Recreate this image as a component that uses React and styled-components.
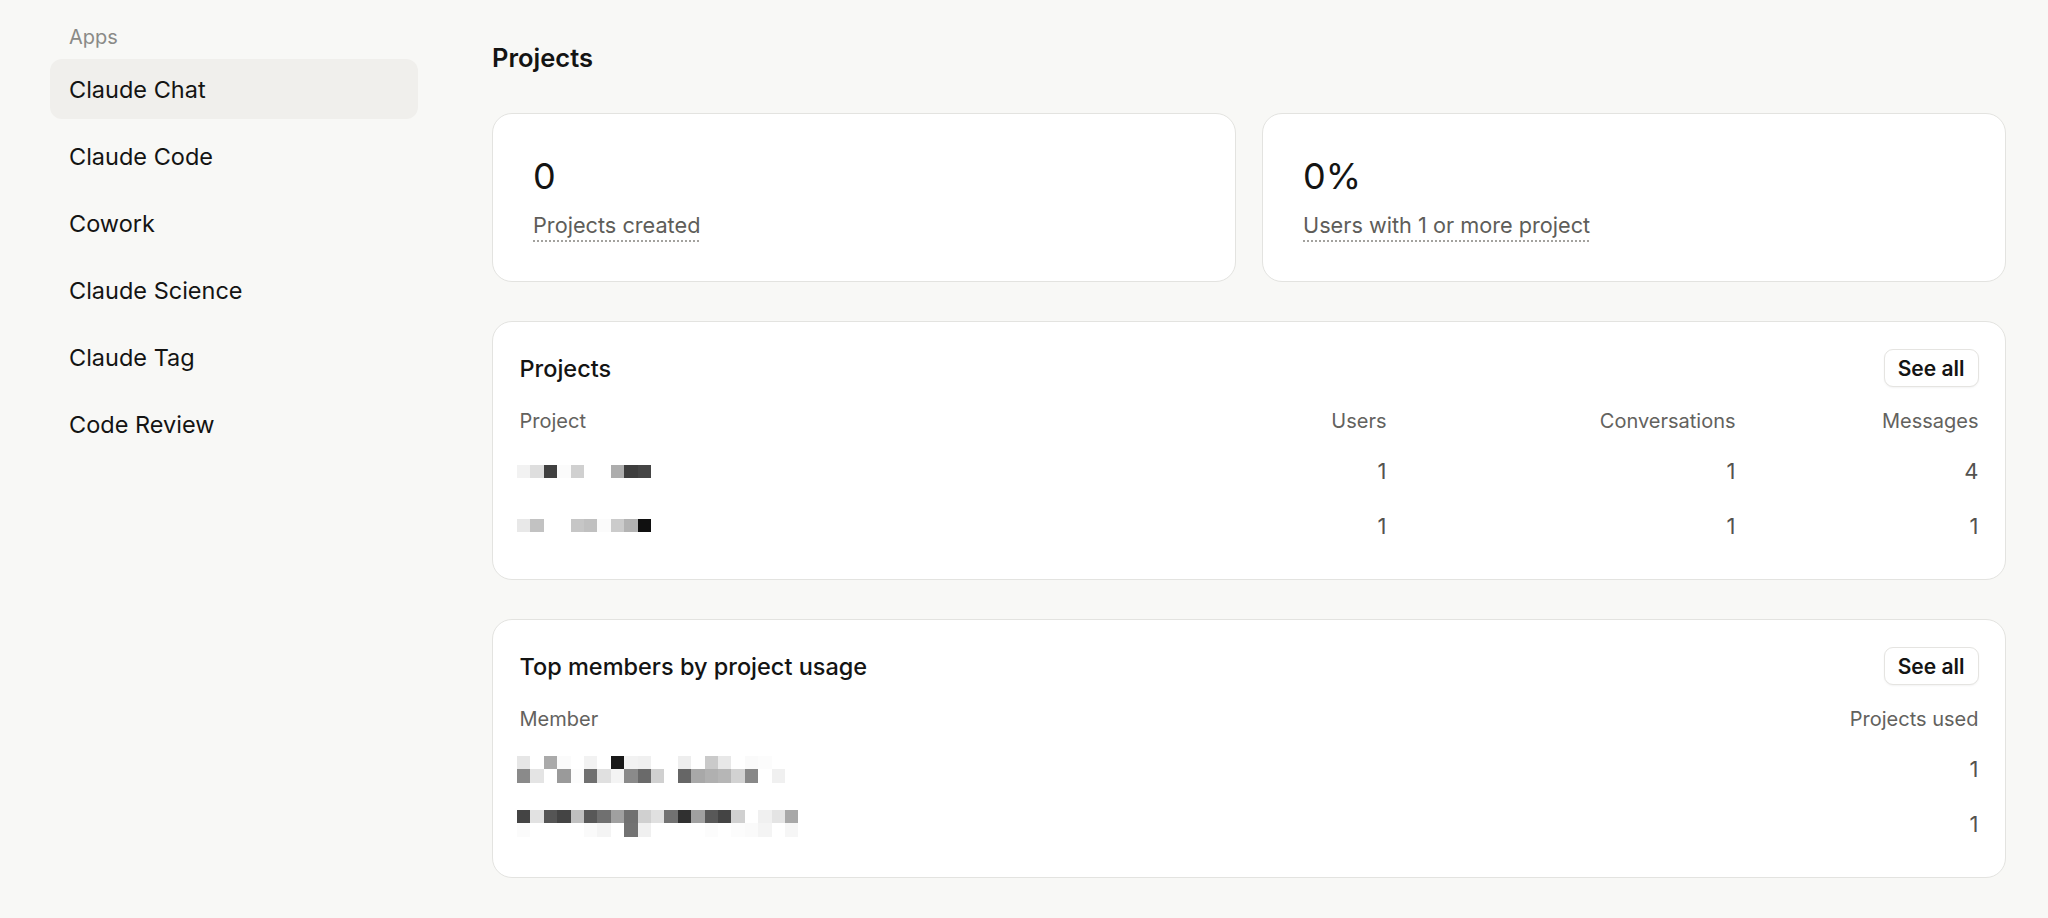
import React from 'react';
import styled, { createGlobalStyle } from 'styled-components';

const GlobalStyle = createGlobalStyle`
    html, body {
        margin: 0;
        padding: 0;
        background: #f8f8f6;
        font-family: Inter, "Noto Sans", sans-serif;
        color: #141413;
    }
`;

const apps = ['Claude Chat', 'Claude Code', 'Cowork', 'Claude Science', 'Claude Tag', 'Code Review'];

const projectRows = [
    { name: [['f2', 'de', '40', 'fb', 'd0', 'ff', 'ff', 'ad', '3e', '45']], users: 1, conversations: 1, messages: 4 },
    { name: [['e8', 'c2', 'ff', 'ff', 'c6', 'c0', 'fb', 'cb', 'b3', '10']], users: 1, conversations: 1, messages: 1 },
];

const memberRows = [
    {
        name: [
            ['e6', 'ff', 'aa', 'fb', 'ff', 'f2', 'ff', '18', 'f2', 'f0', 'ff', 'ff', 'ee', 'ff', 'ca', 'e8', 'ff', 'fa', 'fc', 'ff'],
            ['8a', 'e4', 'ff', '9a', 'fc', '70', 'e0', 'f4', '8a', '6a', 'd0', 'ff', '66', 'a8', 'b0', 'b6', 'd2', '88', 'ff', 'f0'],
        ],
        used: 1,
    },
    {
        name: [
            ['44', 'e2', '55', '44', 'c0', '58', '70', 'a0', '70', 'd0', 'e0', '72', '30', 'a0', '58', '44', 'd0', 'ff', 'f0', 'e4', 'a8'],
            ['fb', 'ff', 'ff', 'ff', 'ff', 'fa', 'f4', 'ff', '72', 'f0', 'ff', 'ff', 'ff', 'ff', 'fc', 'ff', 'fc', 'fa', 'f4', 'ff', 'f6'],
        ],
        used: 1,
    },
];

const CELL = 13.4;

// pixelated (redacted) name, drawn cell by cell
function Mosaic({ cells }) {
    const cols = cells[0].length;
    return (
        <svg width={cols * CELL} height={cells.length * CELL} shapeRendering="crispEdges">
            {cells.map((row, r) =>
                row.map((v, c) => (
                    <rect key={`${r}-${c}`} x={c * CELL} y={r * CELL} width={CELL + 0.5} height={CELL + 0.5} fill={`#${v}${v}${v}`} />
                ))
            )}
        </svg>
    );
}

function App() {
    return (
        <>
            <GlobalStyle />
            <Page>
                <Sidebar>
                    <SectionLabel>Apps</SectionLabel>
                    <NavList>
                        {apps.map((a, i) => (
                            <NavItem key={a} $active={i === 0}>
                                {a}
                            </NavItem>
                        ))}
                    </NavList>
                </Sidebar>

                <Main>
                    <Heading>Projects</Heading>

                    <StatGrid>
                        <StatCard>
                            <StatValue>0</StatValue>
                            <StatLabel>Projects created</StatLabel>
                        </StatCard>
                        <StatCard>
                            <StatValue>0%</StatValue>
                            <StatLabel>Users with 1 or more project</StatLabel>
                        </StatCard>
                    </StatGrid>

                    <Card>
                        <CardHeader>
                            <CardTitle>Projects</CardTitle>
                            <SeeAll>See all</SeeAll>
                        </CardHeader>
                        <Table $cols="minmax(0, 1fr) 200px 349px 243px">
                            <HeadCell>Project</HeadCell>
                            <HeadCell $right>Users</HeadCell>
                            <HeadCell $right>Conversations</HeadCell>
                            <HeadCell $right>Messages</HeadCell>
                            {projectRows.map((p, i) => (
                                <React.Fragment key={i}>
                                    <Cell>
                                        <Mosaic cells={p.name} />
                                    </Cell>
                                    <Cell $right>{p.users}</Cell>
                                    <Cell $right>{p.conversations}</Cell>
                                    <Cell $right>{p.messages}</Cell>
                                </React.Fragment>
                            ))}
                        </Table>
                    </Card>

                    <Card>
                        <CardHeader>
                            <CardTitle>Top members by project usage</CardTitle>
                            <SeeAll>See all</SeeAll>
                        </CardHeader>
                        <Table $cols="minmax(0, 1fr) auto">
                            <HeadCell>Member</HeadCell>
                            <HeadCell $right>Projects used</HeadCell>
                            {memberRows.map((m, i) => (
                                <React.Fragment key={i}>
                                    <Cell>
                                        <Mosaic cells={m.name} />
                                    </Cell>
                                    <Cell $right>{m.used}</Cell>
                                </React.Fragment>
                            ))}
                        </Table>
                    </Card>
                </Main>
            </Page>
        </>
    );
}

export default App;

const Page = styled.div`
    display: flex;
    align-items: flex-start;
    padding: 22px 42px 38px 50px;
    min-height: 918px;
    box-sizing: border-box;
`;

const Sidebar = styled.aside`
    width: 368px;
    flex-shrink: 0;
    display: flex;
    flex-direction: column;
`;

const SectionLabel = styled.div`
    padding-left: 19px;
    font-size: 20px;
    line-height: 30px;
    color: #8a8a87;
    margin-bottom: 7px;
`;

const NavList = styled.nav`
    display: flex;
    flex-direction: column;
    gap: 7px;
`;

const NavItem = styled.div`
    height: 60px;
    display: flex;
    align-items: center;
    padding-left: 19px;
    border-radius: 12px;
    font-size: 23.5px;
    color: #141413;
    background: ${(p) => (p.$active ? '#f0efec' : 'transparent')};
    cursor: pointer;
`;

const Main = styled.main`
    flex: 1;
    margin-left: 74px;
    display: flex;
    flex-direction: column;
    gap: 39px;
`;

const Heading = styled.h1`
    margin: 20px 0 0;
    font-size: 25.5px;
    line-height: 32px;
    font-weight: 600;
`;

const StatGrid = styled.div`
    display: grid;
    grid-template-columns: 1fr 1fr;
    gap: 26px;
`;

const StatCard = styled.div`
    background: #fff;
    border: 1.5px solid #e3e3e0;
    border-radius: 20px;
    padding: 40px 40px;
    display: flex;
    flex-direction: column;
    align-items: flex-start;
    gap: 11px;
`;

const StatValue = styled.div`
    font-size: 36px;
    line-height: 44px;
    font-weight: 400;
    color: #141413;
`;

const StatLabel = styled.span`
    font-size: 21.7px;
    line-height: 32px;
    color: #5e5d59;
    text-decoration: underline dotted #a3a29e;
    text-decoration-thickness: 1.5px;
    text-underline-offset: 7px;
`;

const Card = styled.section`
    background: #fff;
    border: 1.5px solid #e3e3e0;
    border-radius: 20px;
    padding: 27px 26.5px 26px;
`;

const CardHeader = styled.div`
    display: flex;
    align-items: center;
    justify-content: space-between;
    height: 38px;
    margin-bottom: 10px;
`;

const CardTitle = styled.h2`
    margin: 0;
    font-size: 23.5px;
    font-weight: 500;
    color: #141413;
`;

const SeeAll = styled.button`
    height: 38px;
    padding: 0 13px;
    border: 1.5px solid #e5e4e1;
    border-radius: 9px;
    background: #fff;
    box-shadow: 0 1px 2px rgba(0, 0, 0, 0.05);
    font-family: inherit;
    font-size: 21px;
    font-weight: 600;
    color: #141413;
    cursor: pointer;
`;

const Table = styled.div`
    display: grid;
    grid-template-columns: ${(p) => p.$cols};
`;

const HeadCell = styled.div`
    height: 47px;
    display: flex;
    align-items: center;
    justify-content: ${(p) => (p.$right ? 'flex-end' : 'flex-start')};
    font-size: 20px;
    color: #63625e;
`;

const Cell = styled.div`
    height: 54.5px;
    display: flex;
    align-items: center;
    justify-content: ${(p) => (p.$right ? 'flex-end' : 'flex-start')};
    font-size: 22px;
    color: #54534f;
    svg {
        display: block;
        margin-left: -3px;
    }
`;
